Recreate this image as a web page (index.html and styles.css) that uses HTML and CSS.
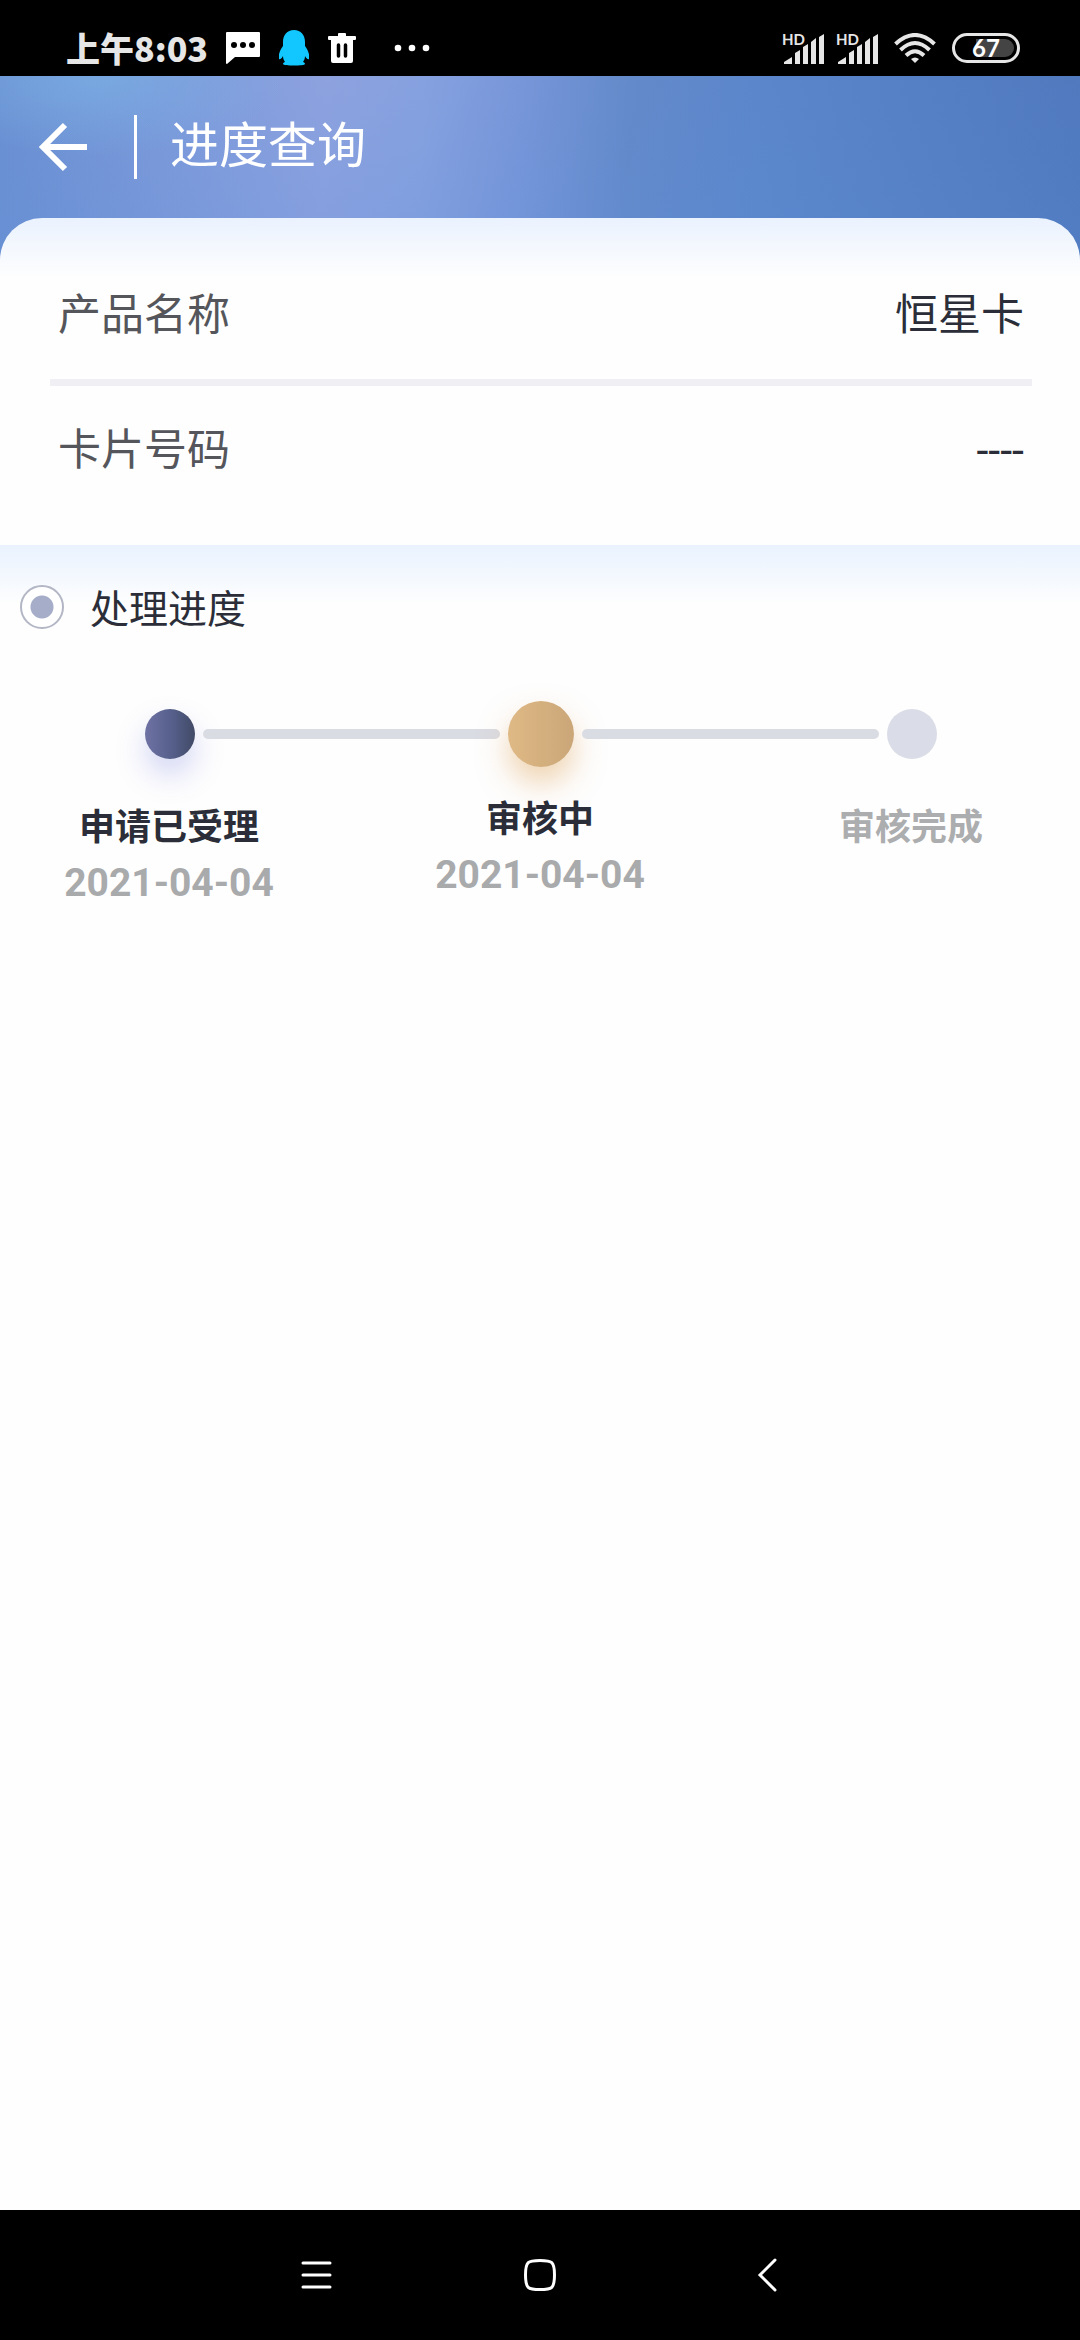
FILE: index.html
```html
<!DOCTYPE html>
<html lang="zh-CN">
<head>
    <meta charset="UTF-8">
    <meta name="viewport" content="width=device-width, initial-scale=1">
    <title>进度查询</title>
    <link rel="stylesheet" href="styles.css">
</head>
<body>
    <div class="status-bar">
        <div class="status-left">
            <span class="time">上午8:03</span>
            <svg class="icon-chat" width="34" height="32" viewBox="0 0 34 32">
                <path d="M1 0h32q1 0 1 1v23q0 1-1 1H9l-8 7q-1 0-1-1V1q0-1 1-1z" fill="#fff"/>
                <circle cx="8" cy="13" r="3"/><circle cx="17" cy="13" r="3"/><circle cx="26" cy="13" r="3"/>
            </svg>
            <svg class="icon-qq" width="30" height="36" viewBox="0 0 30 36">
                <path d="M15 0C8 0 4 5 4 12v4C1 20-1 25 0 29c1 1 3-1 4-3 0 3 1 4 2 6-1 0-2 1-2 2 0 2 22 2 22 0 0-1-1-2-2-2 1-2 2-3 2-6 1 2 3 4 4 3 1-4-1-9-4-13v-4C26 5 22 0 15 0z" fill="#12c7ff"/>
            </svg>
            <svg class="icon-trash" width="28" height="30" viewBox="0 0 28 30">
                <path d="M10 3V1q0-1 1-1h6q1 0 1 1v2h9q1 0 1 1v2q0 1-1 1h-2v21q0 2-2 2H5q-2 0-2-2V7H1Q0 7 0 6V4q0-1 1-1z" fill="#fff"/>
                <path d="M10.500 12v11M17.500 12v11" stroke="#000" stroke-width="3.500" stroke-linecap="round"/>
            </svg>
            <svg class="icon-more" width="36" height="8" viewBox="0 0 36 8" fill="#fff">
                <circle cx="4" cy="4" r="3.300"/><circle cx="18" cy="4" r="3.300"/><circle cx="32" cy="4" r="3.300"/>
            </svg>
        </div>
        <div class="status-right">
            <svg class="icon-signal" width="44" height="38" viewBox="0 0 44 38" fill="#e6e6e6">
                <text x="0" y="16" class="hd">HD</text>
                <path d="M2 35v-2l8-5v7zM13 35V24l5-3v14zM21 35V18l5-3v20zM29 35V13l5-4v26zM37 35V8l5-3v30z"/>
            </svg>
            <svg class="icon-signal" width="44" height="38" viewBox="0 0 44 38" fill="#e6e6e6">
                <text x="0" y="16" class="hd">HD</text>
                <path d="M2 35v-2l8-5v7zM13 35V24l5-3v14zM21 35V18l5-3v20zM29 35V13l5-4v26zM37 35V8l5-3v30z"/>
            </svg>
            <svg class="icon-wifi" width="42" height="30" viewBox="0 0 42 30" fill="none" stroke="#e6e6e6" stroke-width="4">
                <path d="M1.500 11Q21-7 40.500 11M6.500 17Q21 3 35.500 17M12 22.500Q21 14 30 22.500"/>
                <path d="M17 26q4-3 8 0l-4 4z" fill="#e6e6e6" stroke="none"/>
            </svg>
            <div class="battery"><span>67</span></div>
        </div>
    </div>

    <header class="header">
        <button class="back" aria-label="返回">
            <svg width="50" height="50" viewBox="0 0 50 50" fill="none" stroke="#fff" stroke-width="6">
                <path d="M27 3L5 25l22 22M5 25h44"/>
            </svg>
        </button>
        <h1 class="title">进度查询</h1>
    </header>

    <main class="content">
        <section class="card">
            <dl class="info">
                <div class="row">
                    <dt>产品名称</dt>
                    <dd>恒星卡</dd>
                </div>
                <div class="row">
                    <dt>卡片号码</dt>
                    <dd>----</dd>
                </div>
            </dl>
        </section>

        <section class="progress">
            <h2 class="progress-title"><span class="bullet"></span>处理进度</h2>
            <div class="track">
                <span class="dot done"></span>
                <span class="line"></span>
                <span class="dot current"></span>
                <span class="line"></span>
                <span class="dot"></span>
            </div>
            <ol class="steps">
                <li class="step">
                    <span class="name">申请已受理</span>
                    <time class="date">2021-04-04</time>
                </li>
                <li class="step step-current">
                    <span class="name">审核中</span>
                    <time class="date">2021-04-04</time>
                </li>
                <li class="step step-pending">
                    <span class="name">审核完成</span>
                </li>
            </ol>
        </section>
    </main>

    <nav class="nav-bar">
        <button aria-label="菜单">
            <svg width="40" height="40" viewBox="0 0 40 40" fill="none" stroke="#fff" stroke-width="3" stroke-linecap="round">
                <path d="M7 8h27M7 20h27M7 32h27"/>
            </svg>
        </button>
        <button aria-label="主页">
            <svg width="40" height="40" viewBox="0 0 40 40" fill="none" stroke="#fff" stroke-width="3">
                <path d="M20 5.500c12 0 14.500 1 14.500 14.500S32 34.500 20 34.500 5.500 33.500 5.500 20 8 5.500 20 5.500z"/>
            </svg>
        </button>
        <button aria-label="返回">
            <svg width="40" height="40" viewBox="0 0 40 40" fill="none" stroke="#fff" stroke-width="3" stroke-linecap="round">
                <path d="M31 5L16 20l15 15"/>
            </svg>
        </button>
    </nav>
</body>
</html>
```
FILE: styles.css
```css
* {
    box-sizing: border-box;
}

body {
    margin: 0;
    min-height: 100vh;
    display: flex;
    flex-direction: column;
    background-color: #fefefe;
    font-family: Roboto, "Noto Sans CJK SC", sans-serif;
    color: #2b2e38;
}

button {
    padding: 0;
    border: none;
    background: none;
    cursor: pointer;
}

svg {
    display: block;
    flex-shrink: 0;
}

/* status bar */
.status-bar {
    height: 76px;
    padding: 20px 60px 0 66px;
    display: flex;
    align-items: center;
    justify-content: space-between;
    background: #000;
    color: #e6e6e6;
}

.status-left,
.status-right {
    display: flex;
    align-items: center;
}

.time {
    font: 900 34px/48px "Noto Sans CJK SC", sans-serif;
    margin-right: 18px;
}

.icon-chat,
.icon-qq {
    margin-right: 19px;
}

.icon-trash {
    margin-right: 38px;
}

.status-right {
    gap: 10px;
}

.icon-signal {
    overflow: visible;
}

.hd {
    font: 700 15px Lato, sans-serif;
}

.icon-wifi {
    margin-left: 4px;
}

.battery {
    width: 68px;
    height: 30px;
    margin-left: 6px;
    padding: 3px;
    border: 3px solid #e6e6e6;
    border-radius: 15px;
}

.battery span {
    display: block;
    border-radius: 9px;
    background: linear-gradient(90deg, #000 33%, #444 33%);
    font: 700 24px/18px Lato, sans-serif;
    text-align: center;
    color: #fff;
}

/* header */
.header {
    padding: 39px 38px 81px;
    display: flex;
    align-items: center;
    background:
        radial-gradient(ellipse 190px 80px at 9% 0, rgba(122, 176, 228, 0.7), transparent),
        linear-gradient(0deg, rgba(90, 142, 218, 0.2), transparent),
        linear-gradient(92deg, #6a90d2, #7f9bdb 18%, #8da2df 30%, #86a1df 39%, #7796d9 48%, #638aca 58%, #5b86cb 70%, #5079be);
}

.back {
    margin-right: 46px;
}

.title {
    margin: 0;
    padding-left: 33px;
    border-left: 3px solid #fff;
    font-size: 49px;
    font-weight: 400;
    line-height: 64px;
    color: #fff;
}

.content {
    flex: 1;
}

/* card info */
.card {
    margin-top: -42px;
    padding: 33px 48px 31px 50px;
    border-radius: 42px 42px 0 0;
    background: linear-gradient(#eaf2fe, #fefefe 60px);
}

.info {
    margin: 0;
}

.row {
    padding: 32px 8px;
    display: flex;
    justify-content: space-between;
    font-size: 43px;
    line-height: 64px;
}

.row:first-child {
    border-bottom: 7px solid #f0eff3;
}

.row dt {
    color: #55565b;
}

.row dd {
    margin: 0;
}

/* progress */
.progress {
    padding-top: 35px;
    background: linear-gradient(#e9f2fe, #fefefe 60px);
}

.progress-title {
    margin: 0;
    padding: 0 20px;
    display: flex;
    align-items: center;
    gap: 26px;
    font-size: 39px;
    font-weight: 400;
    line-height: 60px;
}

.bullet {
    width: 44px;
    height: 44px;
    margin-bottom: 6px;
    border: 2px solid #b3b6c4;
    border-radius: 50%;
    background: radial-gradient(circle, #a6adc9 11px, #fff 12px);
}

.track {
    padding: 61px 143px 29px 145px;
    display: flex;
    align-items: center;
    gap: 8px;
}

.dot {
    width: 50px;
    height: 50px;
    border-radius: 50%;
    background: #dadde7;
}

.done {
    background: linear-gradient(90deg, #6e72a4, #555f8a 55%, #414a66);
    box-shadow: 0 16px 30px rgba(110, 120, 220, 0.3);
}

.current {
    width: 66px;
    height: 66px;
    background: linear-gradient(90deg, #dfb985, #caa678);
    box-shadow: 0 16px 30px rgba(225, 170, 100, 0.5);
}

.line {
    flex: 1;
    height: 10px;
    border-radius: 5px;
    background: #dadce3;
}

.steps {
    margin: 0;
    padding: 0 62px;
    display: flex;
    justify-content: space-between;
    list-style: none;
}

.step {
    width: 214px;
    padding-top: 8px;
    display: flex;
    flex-direction: column;
    align-items: center;
    font-weight: 700;
}

.step-current {
    padding-top: 0;
}

.name {
    font-size: 36px;
    line-height: 48px;
}

.date {
    margin-top: 7px;
    font-size: 39px;
    line-height: 48px;
    color: #a9aaac;
}

.step-pending .name {
    color: #acadaf;
}

/* bottom navigation */
.nav-bar {
    height: 130px;
    display: flex;
    align-items: center;
    justify-content: center;
    gap: 184px;
    background: #000;
}
```
